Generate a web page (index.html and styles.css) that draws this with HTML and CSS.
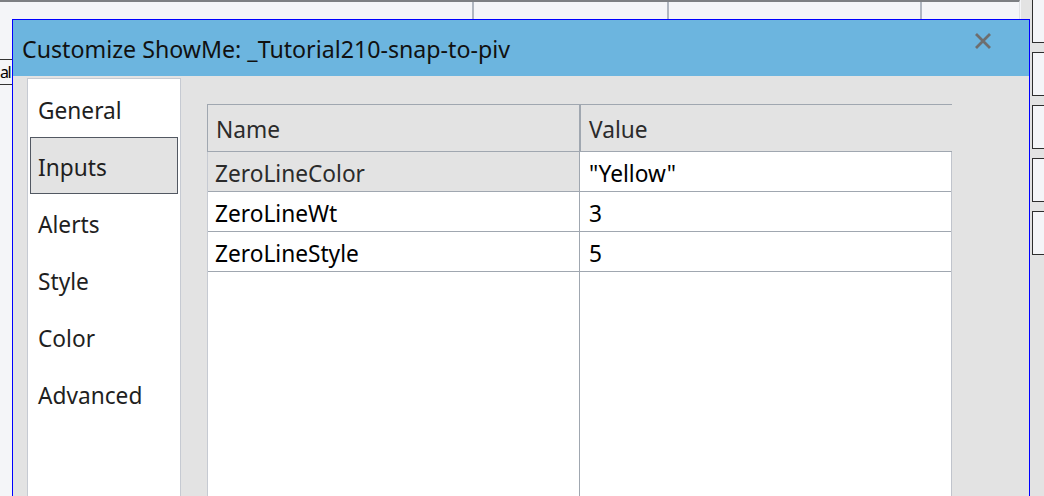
FILE: index.html
```html
<!DOCTYPE html>
<html>
<head>
<meta charset="utf-8">
<link rel="stylesheet" href="styles.css">
<title>Customize ShowMe</title>
</head>
<body>
<div class="desk">
  <div class="app-top">
    <div class="app-col c1"></div>
    <div class="app-col c2"></div>
    <div class="app-col c3"></div>
  </div>
  <div class="app-side">
    <div class="side-box"></div>
    <div class="side-box"></div>
    <div class="side-box"></div>
    <div class="side-box"></div>
    <div class="side-box"></div>
  </div>
  <div class="app-tab">al</div>

  <div class="dialog">
    <div class="titlebar">
      <span class="title">Customize ShowMe: _Tutorial210-snap-to-piv</span>
      <svg class="close" width="18" height="18" viewBox="0 0 18 18">
        <path d="M2 2 L16 16 M16 2 L2 16" stroke="#6e6e6e" stroke-width="2.8" fill="none"/>
      </svg>
    </div>
    <div class="content">
      <nav class="nav">
        <div class="nav-item">General</div>
        <div class="nav-item selected">Inputs</div>
        <div class="nav-item">Alerts</div>
        <div class="nav-item">Style</div>
        <div class="nav-item">Color</div>
        <div class="nav-item">Advanced</div>
      </nav>
      <div class="grid">
        <div class="grid-head">
          <div class="hcell name">Name</div>
          <div class="hcell value">Value</div>
        </div>
        <div class="grid-body">
          <div class="row">
            <div class="cell name sel">ZeroLineColor</div>
            <div class="cell value">"Yellow"</div>
          </div>
          <div class="row">
            <div class="cell name">ZeroLineWt</div>
            <div class="cell value">3</div>
          </div>
          <div class="row">
            <div class="cell name">ZeroLineStyle</div>
            <div class="cell value">5</div>
          </div>
          <div class="row filler">
            <div class="cell name"></div>
            <div class="cell value"></div>
          </div>
        </div>
      </div>
    </div>
  </div>
</div>
</body>
</html>
```

FILE: styles.css
```css
html, body {
  margin: 0;
  padding: 0;
}
body {
  width: 1044px;
  height: 496px;
  overflow: hidden;
  background: #f4f5f8;
  font-family: "Noto Sans", "Open Sans", "DejaVu Sans", sans-serif;
}
.desk {
  position: relative;
  width: 1044px;
  height: 496px;
  overflow: hidden;
}

/* background application */
.app-top {
  position: absolute;
  left: 0;
  top: 0;
  width: 1020px;
  height: 30px;
  border-top: 2px solid #7d7f83;
  border-right: 1px solid #dfe1e5;
  box-sizing: border-box;
}
.app-col {
  position: absolute;
  top: 0;
  width: 2px;
  height: 30px;
  background: #b0b6c0;
}
.c1 { left: 472px; }
.c2 { left: 667px; }
.c3 { left: 920px; }

.app-side {
  position: absolute;
  left: 1021px;
  top: 0;
  width: 23px;
  height: 496px;
  background: #e3e3e3;
  display: flex;
  flex-direction: column;
  gap: 9px;
  padding: 0 0 0 11px;
  box-sizing: border-box;
}
.side-box {
  flex: none;
  height: 44px;
  border: 1px solid #2e2e2e;
  border-right: none;
  background: #f4f5f8;
  box-sizing: border-box;
}
.side-box:first-child {
  margin-top: -1px;
}
.app-tab {
  position: absolute;
  left: 0;
  top: 59px;
  width: 12px;
  height: 26px;
  box-sizing: border-box;
  border-top: 1px solid #333;
  border-bottom: 1px solid #333;
  font-size: 16px;
  line-height: 24px;
  letter-spacing: -1.5px;
  color: #000;
  white-space: nowrap;
  background: #f4f5f8;
}

/* dialog window */
.dialog {
  position: absolute;
  left: 12px;
  top: 19px;
  width: 1018px;
  height: 500px;
  box-sizing: border-box;
  border: 1px solid #0000ff;
  background: #e3e3e3;
  display: flex;
  flex-direction: column;
}
.titlebar {
  flex: none;
  height: 56px;
  background: #6cb5df;
  display: flex;
  align-items: center;
  padding: 0 37px 0 9px;
}
.title {
  flex: 1;
  font-size: 23.2px;
  color: #111;
  padding-top: 2px;
  white-space: nowrap;
}
.close {
  flex: none;
  margin-top: -14px;
}

.content {
  flex: 1;
  display: flex;
  padding: 2px 0 0 14px;
  min-height: 0;
}
.nav {
  flex: none;
  width: 154px;
  box-sizing: border-box;
  border: 1px solid #c6cad2;
  border-bottom: none;
  background: #fff;
  padding: 1px 1px 0 1px;
}
.nav-item {
  height: 57px;
  box-sizing: border-box;
  margin: 0 1px;
  border: 1px solid transparent;
  display: flex;
  align-items: center;
  padding: 3px 0 0 7px;
  font-size: 22.7px;
  color: #1f1f1f;
}
.nav-item.selected {
  background: #e3e3e3;
  border-color: #525862;
}

.grid {
  flex: none;
  width: 745px;
  margin: 26px 0 0 26px;
  display: flex;
  flex-direction: column;
}
.grid-head {
  flex: none;
  display: flex;
  height: 48px;
  box-sizing: border-box;
  border-top: 1px solid #a0a7b0;
  border-bottom: 1px solid #a0a7b0;
  border-left: 1px solid #a0a7b0;
  background: #e3e3e3;
}
.hcell {
  display: flex;
  align-items: center;
  padding-top: 3px;
  font-size: 22.7px;
  color: #2b2b2b;
}
.hcell.name {
  width: 373px;
  padding-left: 8px;
  box-sizing: border-box;
  border-right: 2px solid #a0a7b0;
}
.hcell.value {
  flex: 1;
  padding-left: 8px;
}
.grid-body {
  flex: 1;
  display: flex;
  flex-direction: column;
  background: #fff;
  border-left: 1px solid #c6cad2;
  border-right: 1px solid #c0c4cc;
}
.row {
  flex: none;
  display: flex;
  height: 40px;
  box-sizing: border-box;
  border-bottom: 1px solid #a0a7b0;
}
.row.filler {
  flex: 1;
  border-bottom: none;
}
.cell {
  display: flex;
  align-items: center;
  padding-top: 3px;
  font-size: 22.7px;
  color: #000;
}
.cell.name {
  width: 372px;
  box-sizing: border-box;
  padding-left: 7px;
  border-right: 1px solid #a0a7b0;
}
.cell.name.sel {
  background: #e3e3e3;
  color: #2b2b2b;
}
.cell.value {
  flex: 1;
  padding-left: 9px;
}
```
